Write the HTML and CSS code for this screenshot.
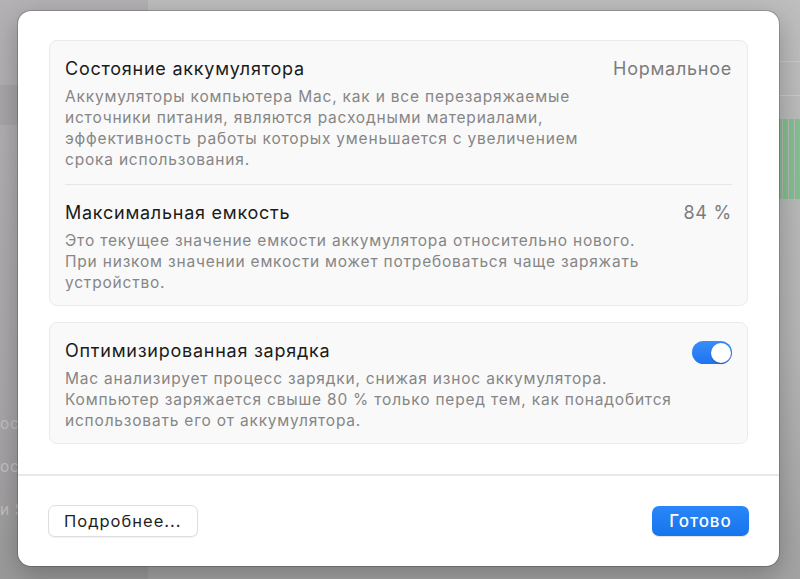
FILE: index.html
```html
<!DOCTYPE html>
<html lang="ru">
<head>
<meta charset="utf-8">
<title>Состояние аккумулятора</title>
<link rel="stylesheet" href="styles.css">
</head>
<body>
<div class="desktop">
  <aside class="sidebar">
    <div class="side-gap"></div>
    <div class="side-selected"></div>
    <div class="side-list">
      <div class="side-item">ос</div>
      <div class="side-item">ос</div>
      <div class="side-item">и S</div>
    </div>
  </aside>
  <main class="main">
    <div class="main-row"></div>
    <div class="main-row"></div>
    <div class="chart">
      <span class="bar"></span><span class="bar"></span><span class="bar"></span><span class="bar"></span>
    </div>
  </main>
</div>

<div class="sheet">
  <div class="sheet-body">
    <section class="group">
      <div class="row">
        <div class="row-text">
          <div class="row-title">Состояние аккумулятора</div>
          <div class="row-desc">Аккумуляторы компьютера Mac, как и все перезаряжаемые источники питания, являются расходными материалами, эффективность работы которых уменьшается с увеличением срока использования.</div>
        </div>
        <div class="row-value">Нормальное</div>
      </div>
      <div class="sep"></div>
      <div class="row">
        <div class="row-text">
          <div class="row-title">Максимальная емкость</div>
          <div class="row-desc">Это текущее значение емкости аккумулятора относительно нового. При низком значении емкости может потребоваться чаще заряжать устройство.</div>
        </div>
        <div class="row-value">84 %</div>
      </div>
    </section>
    <section class="group">
      <div class="row">
        <div class="row-text">
          <div class="row-title">Оптимизированная зарядка</div>
          <div class="row-desc">Mac анализирует процесс зарядки, снижая износ аккумулятора. Компьютер заряжается свыше 80 % только перед тем, как понадобится использовать его от аккумулятора.</div>
        </div>
        <div class="toggle"><span class="knob"></span></div>
      </div>
    </section>
  </div>
  <footer class="sheet-footer">
    <button class="btn">Подробнее...</button>
    <button class="btn btn-primary">Готово</button>
  </footer>
</div>
</body>
</html>
```

FILE: styles.css
```css
* { box-sizing: border-box; }
html, body {
  margin: 0;
  padding: 0;
  width: 800px;
  height: 579px;
  overflow: hidden;
  font-family: "Inter", "Noto Sans", sans-serif;
}
.desktop {
  display: flex;
  width: 800px;
  height: 579px;
}
.sidebar {
  width: 148px;
  background: linear-gradient(#b4b2b4, #a9a7a9 70%, #9b9a9b);
  display: flex;
  flex-direction: column;
}
.side-gap { height: 85px; }
.side-selected {
  height: 40px;
  background: #a8a6a8;
}
.side-list {
  margin-top: 288px;
  display: flex;
  flex-direction: column;
  gap: 21px;
}
.side-item {
  font-size: 15.5px;
  letter-spacing: 0.8px;
  line-height: 22px;
  color: #c3c1c3;
  white-space: nowrap;
}
.main {
  flex: 1;
  background: linear-gradient(#bebebe, #b5b5b5 60%, #a3a3a3);
  display: flex;
  flex-direction: column;
}
.main-row {
  height: 34px;
  border-bottom: 1px solid #cacaca;
  margin-top: 28px;
}
.main-row + .main-row { margin-top: 0; }
.chart {
  margin-top: 23px;
  height: 80px;
  display: flex;
  justify-content: flex-end;
  gap: 1px;
}
.bar {
  width: 5px;
  background: #84c090;
}
.sheet {
  position: absolute;
  left: 18px;
  top: 11px;
  width: 761px;
  height: 555px;
  background: #ffffff;
  border-radius: 13px;
  box-shadow: 0 0 0 1px rgba(0,0,0,0.18), 0 8px 28px rgba(0,0,0,0.28);
  display: flex;
  flex-direction: column;
}
.sheet-body {
  padding: 29px 31px 30px 31px;
  display: flex;
  flex-direction: column;
  gap: 16px;
  border-bottom: 2px solid #e8e8e8;
}
.group {
  background: #f9f9f9;
  border: 1px solid #ebebeb;
  border-radius: 8px;
  padding: 0 15px;
}
.row {
  display: flex;
  align-items: flex-start;
  gap: 20px;
  padding: 17px 0 12px 0;
}
.row-text { flex: 1; }
.row-title {
  font-size: 18px;
  letter-spacing: 0.75px;
  line-height: 22px;
  color: #1b1b1b;
  margin-bottom: 6px;
}
.row-desc {
  font-size: 15.5px;
  letter-spacing: 0.8px;
  line-height: 21px;
  color: #868686;
}
.row-value {
  font-size: 18px;
  letter-spacing: 0.75px;
  line-height: 22px;
  color: #7c7c7c;
  white-space: nowrap;
}
.sep {
  height: 1px;
  background: #e6e6e6;
  margin-top: 2px;
}
.toggle {
  width: 40px;
  height: 23px;
  border-radius: 12px;
  background: linear-gradient(#3a8cf8, #1f74f0);
  margin-top: 1px;
  padding: 1.5px;
  display: flex;
  justify-content: flex-end;
}
.knob {
  width: 20px;
  height: 20px;
  border-radius: 50%;
  background: #fff;
  box-shadow: 0 1px 2px rgba(0,0,0,0.25);
}
.sheet-footer {
  flex: 1;
  display: flex;
  justify-content: space-between;
  align-items: center;
  padding: 0 30px 0 30px;
}
.btn {
  font-family: "Inter", "Noto Sans", sans-serif;
  font-size: 16.5px;
  letter-spacing: 1px;
  height: 32px;
  padding: 0 15px;
  border-radius: 7px;
  border: 1px solid #dedede;
  background: #fff;
  color: #1f1f1f;
  box-shadow: 0 1px 1px rgba(0,0,0,0.06);
}
.btn-primary {
  width: 97px;
  height: 30px;
  padding: 0;
  border: none;
  color: #fff;
  font-size: 17px;
  letter-spacing: 0.9px;
  font-weight: 500;
  background: linear-gradient(#2a86f8, #1674ee);
  box-shadow: 0 1px 1px rgba(0,0,0,0.12);
}
```
